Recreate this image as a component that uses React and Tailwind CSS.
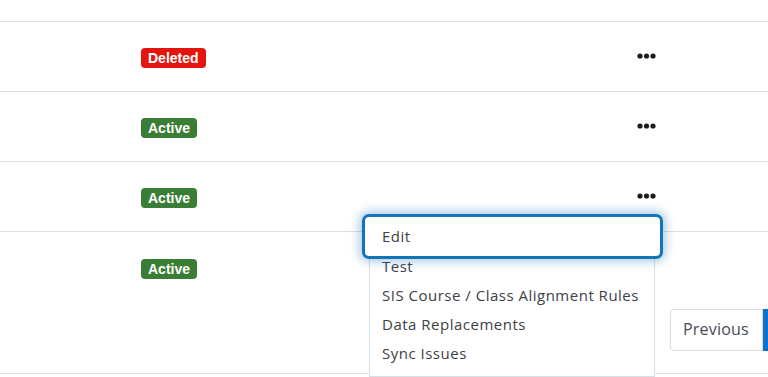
import React from "react";

function Dots() {
  return (
    <svg width="19" height="6" viewBox="0 0 19 6" className="block">
      <circle cx="3" cy="3" r="2.6" fill="#1b1b1f" />
      <circle cx="9.5" cy="3" r="2.6" fill="#1b1b1f" />
      <circle cx="16" cy="3" r="2.6" fill="#1b1b1f" />
    </svg>
  );
}

function Badge({ kind }) {
  const cls = kind === "Deleted" ? "bg-[#e3150e]" : "bg-[#3a7d35]";
  return (
    <span
      className={`${cls} inline-flex items-center h-[20px] px-[7px] rounded-[4px] text-white text-[14px] font-bold leading-none`}
      style={{ fontFamily: '"Liberation Sans", Arial, sans-serif' }}
    >
      {kind}
    </span>
  );
}

function Row({ status }) {
  return (
    <div className="h-[70px] border-t border-[#dbe2e4] flex items-center">
      <div className="w-[141px]" />
      <div className="w-[496px] mt-[1px]">
        <Badge kind={status} />
      </div>
      <div className="w-[19px] -mt-[2px]">
        <Dots />
      </div>
    </div>
  );
}

export default function App() {
  const font = { fontFamily: '"Open Sans", "Noto Sans", sans-serif' };
  return (
    <div className="relative w-[768px] h-[377px] bg-white overflow-hidden">
      <div className="h-[21px]" />
      <Row status="Deleted" />
      <Row status="Active" />
      <Row status="Active" />
      <div className="h-[143px] border-t border-[#dbe2e4] border-b flex flex-col">
        <div className="h-[70px] flex items-center">
          <div className="w-[141px]" />
          <div className="mt-[2px]">
            <Badge kind="Active" />
          </div>
        </div>
        <div className="flex justify-end pt-[7px]">
          <div
            className="h-[42px] w-[93px] border border-[#dcdcdc] rounded-l-[4px] flex items-center pl-[12px] pb-[2px] text-[16px] tracking-[0.2px] text-[#454a55]"
            style={font}
          >
            Previous
          </div>
          <div className="h-[42px] w-[5px] bg-[#0b72d0]" />
        </div>
      </div>

      <div
        className="absolute left-[369px] top-[214px] w-[286px] h-[163px] bg-white border border-[#d7e0e4] pt-[8px] text-[15px] tracking-[0.5px] text-[#3d4147]"
        style={font}
      >
        <div className="h-[29px]" />
        <div className="h-[29px] flex items-center pl-[12px]">Test</div>
        <div className="h-[29px] flex items-center pl-[12px] whitespace-nowrap">SIS Course / Class Alignment Rules</div>
        <div className="h-[29px] flex items-center pl-[12px]">Data Replacements</div>
        <div className="h-[29px] flex items-center pl-[12px]">Sync Issues</div>
      </div>
      <div
        className="absolute left-[362px] top-[214px] w-[301px] h-[45px] bg-white border-[3px] border-[#1474b8] rounded-[7px] shadow-[0_0_10px_3px_rgba(20,116,184,0.35)] flex items-center pl-[17px] text-[15px] tracking-[0.5px] text-[#3d4147]"
        style={font}
      >
        Edit
      </div>
    </div>
  );
}
